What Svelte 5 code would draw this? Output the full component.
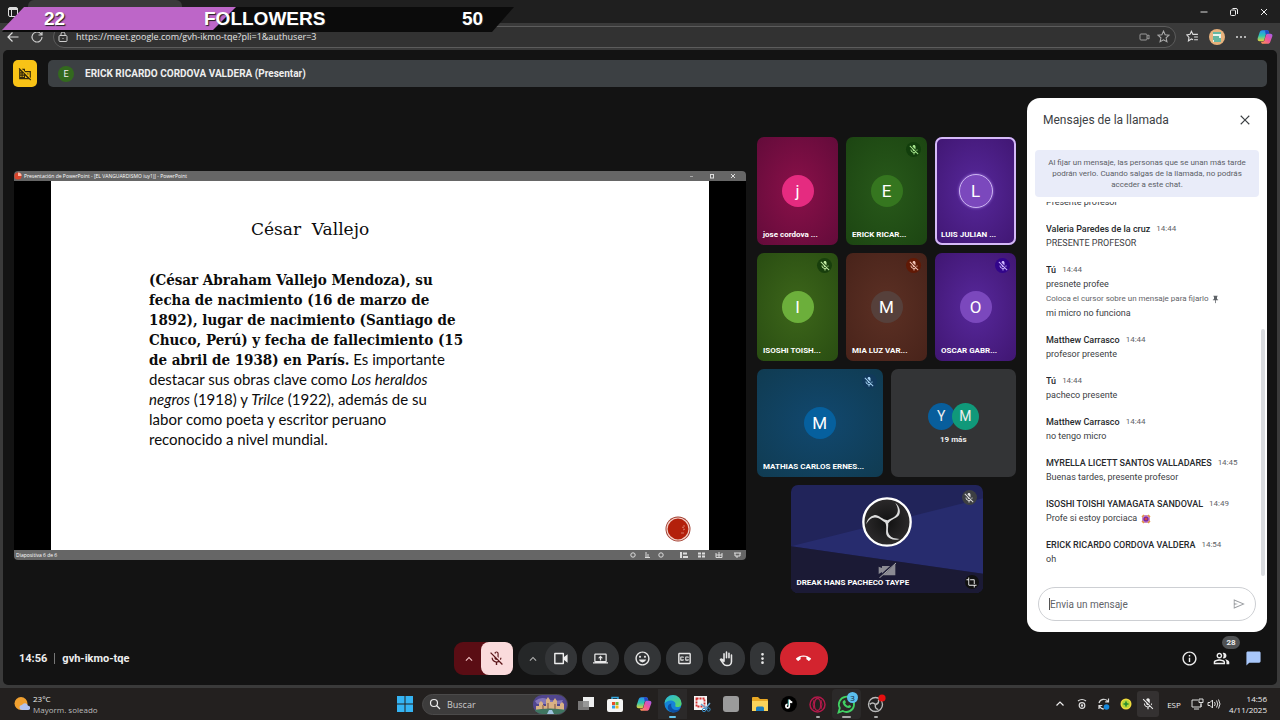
<script>
  const paths = {
    micOff: 'M19 11h-1.7c0 .74-.16 1.43-.43 2.05l1.23 1.23c.56-.98.9-2.09.9-3.28zm-4.02.17c0-.06.02-.11.02-.17V5c0-1.66-1.34-3-3-3S9 3.34 9 5v.18l5.98 5.99zM4.27 3L3 4.27l6.01 6.01V11c0 1.66 1.33 3 2.99 3 .22 0 .44-.03.65-.08l1.66 1.66c-.71.33-1.5.52-2.31.52-2.76 0-5.3-2.1-5.3-5.1H5c0 3.41 2.72 6.23 6 6.72V21h2v-3.28c.91-.13 1.77-.45 2.54-.9L19.73 21 21 19.73 4.27 3z',
    micOffLine: 'M19 11h-1.7c0 .74-.16 1.43-.43 2.05l1.23 1.23c.56-.98.9-2.09.9-3.28zM10.6 5c0-.8.6-1.4 1.4-1.4s1.4.6 1.4 1.4v4.6l1.6 1.6V5c0-1.66-1.34-3-3-3-1.5 0-2.7 1-2.95 2.4l1.55 1.55V5zM4.27 3L3 4.27l6.01 6.01V11c0 1.66 1.33 3 2.99 3 .22 0 .44-.03.65-.08l1.66 1.66c-.71.33-1.5.52-2.31.52-2.76 0-5.3-2.1-5.3-5.1H5c0 3.41 2.72 6.23 6 6.72V21h2v-3.28c.91-.13 1.77-.45 2.54-.9L19.73 21 21 19.73 4.27 3z',
    present: 'M20 18c1.1 0 2-.9 2-2V6c0-1.1-.9-2-2-2H4c-1.1 0-2 .9-2 2v10c0 1.1.9 2 2 2H0v2h24v-2h-4zM4 16V6h16v10H4zM11 15h2v-3.5h3L12 7.2l-4 4.3h3z',
    hangup: 'M12 9c-1.6 0-3.15.25-4.6.72v3.1c0 .39-.23.74-.56.9-.98.49-1.87 1.12-2.66 1.85-.18.18-.43.28-.7.28-.28 0-.53-.11-.71-.29L.29 13.08c-.18-.17-.29-.42-.29-.7 0-.28.11-.53.29-.71C3.34 8.78 7.46 7 12 7s8.66 1.78 11.71 4.67c.18.18.29.43.29.71 0 .28-.11.53-.29.71l-2.48 2.48c-.18.18-.43.29-.71.29-.27 0-.52-.11-.7-.28-.79-.74-1.69-1.36-2.67-1.85-.33-.16-.56-.5-.56-.9v-3.1C15.15 9.25 13.6 9 12 9z',
    mood: 'M12 2C6.47 2 2 6.48 2 12s4.47 10 10 10 10-4.48 10-10S17.52 2 12 2zM12 20c-4.42 0-8-3.58-8-8s3.58-8 8-8 8 3.58 8 8-3.58 8-8 8zm3.5-9c.83 0 1.5-.67 1.5-1.5S16.33 8 15.5 8 14 8.67 14 9.5s.67 1.5 1.5 1.5zm-7 0c.83 0 1.5-.67 1.5-1.5S9.33 8 8.5 8 7 8.67 7 9.5 7.67 11 8.5 11zM7 13.5h10c-.8 2.3-2.7 4-5 4s-4.2-1.7-5-4z',
    camera: 'M15 6v12H5V6h10m1-2H4c-.55 0-1 .45-1 1v14c0 .55.45 1 1 1h12c.55 0 1-.45 1-1v-5l5 4V6l-5 4V5c0-.55-.45-1-1-1z',
    captions: 'M19 4H5c-1.11 0-2 .9-2 2v12c0 1.1.89 2 2 2h14c1.1 0 2-.9 2-2V6c0-1.1-.9-2-2-2zm0 14H5V6h14v12zM7 15h3c.55 0 1-.45 1-1v-1H9.5v.5h-2v-3h2v.5H11v-1c0-.55-.45-1-1-1H7c-.55 0-1 .45-1 1v4c0 .55.45 1 1 1zm7 0h3c.55 0 1-.45 1-1v-1h-1.5v.5h-2v-3h2v.5H18v-1c0-.55-.45-1-1-1h-3c-.55 0-1 .45-1 1v4c0 .55.45 1 1 1z',
    more: 'M12 7.5a2.2 2.2 0 1 0 0-4.4 2.2 2.2 0 0 0 0 4.4zm0 2.3a2.2 2.2 0 1 0 0 4.4 2.2 2.2 0 0 0 0-4.4zm0 6.7a2.2 2.2 0 1 0 0 4.4 2.2 2.2 0 0 0 0-4.4z',
    up: 'M12 8l-6 6 1.4 1.4 4.6-4.6 4.6 4.6L18 14z',
    info: 'M11 7h2v2h-2zm0 4h2v6h-2zm1-9C6.48 2 2 6.48 2 12s4.48 10 10 10 10-4.48 10-10S17.52 2 12 2zm0 18c-4.41 0-8-3.59-8-8s3.59-8 8-8 8 3.59 8 8-3.59 8-8 8z',
    people: 'M16.67 13.13C18.04 14.06 19 15.32 19 17v3h4v-3c0-2.18-3.57-3.47-6.33-3.87zM15 12c2.21 0 4-1.79 4-4s-1.79-4-4-4c-.47 0-.91.1-1.33.24C14.5 5.27 15 6.58 15 8s-.5 2.73-1.33 3.76c.42.14.86.24 1.33.24zM9 12c2.21 0 4-1.79 4-4s-1.79-4-4-4-4 1.79-4 4 1.79 4 4 4zm0-6c1.1 0 2 .9 2 2s-.9 2-2 2-2-.9-2-2 .9-2 2-2zM9 13c-2.67 0-8 1.34-8 4v3h16v-3c0-2.66-5.33-4-8-4zm6 5H3v-.99C3.2 16.29 6.3 15 9 15s5.8 1.29 6 2v1z',
    chat: 'M20 2H4c-1.1 0-2 .9-2 2v18l4-4h14c1.1 0 2-.9 2-2V4c0-1.1-.9-2-2-2z',
    crop: 'M17 15h2V7c0-1.1-.9-2-2-2H9v2h8v8zM7 17V1H5v4H1v2h4v10c0 1.1.9 2 2 2h10v4h2v-4h4v-2H7z',
    send: 'M3 20V4l19 8-19 8zm1.5-2.3L18 12 4.5 6.3v4.4l6 1.3-6 1.3z',
    pin: 'M16 9V4h1c.55 0 1-.45 1-1s-.45-1-1-1H7c-.55 0-1 .45-1 1s.45 1 1 1h1v5c0 1.66-1.34 3-3 3v2h5.97v7l1 1 1-1v-7H19v-2c-1.66 0-3-1.34-3-3z',
    close: 'M19 6.2L17.8 5 12 10.8 6.2 5 5 6.2 10.8 12 5 17.8 6.2 19 12 13.2 17.8 19 19 17.8 13.2 12z',
    noCompany: 'M1.1 3L2.5 1.6l20 20-1.4 1.4-2-2H2V4zM4 6.5V9h2V8.5zM4 11v2h2v-2zm0 4v2h2v-2zm4 0v2h2v-2zm0-4v2h2v-2zm4 8h4l-4-4zM6.5 3H12v4h10v12l-2-2V9h-7.500L10 6.500V5H8.500zM15 11h3v2h-1.500z'
  };

  const tiles = [
    [
      { name: 'jose cordova ...', letter: 'j', hue: 'pink' },
      { name: 'ERICK RICAR...', letter: 'E', hue: 'green', muted: true },
      { name: 'LUIS JULIAN ...', letter: 'L', hue: 'violet', speaking: true }
    ],
    [
      { name: 'ISOSHI TOISH...', letter: 'I', hue: 'lime', muted: true },
      { name: 'MIA LUZ VAR...', letter: 'M', hue: 'brown', muted: true },
      { name: 'OSCAR GABR...', letter: 'O', hue: 'violet', muted: true }
    ]
  ];

  const messages = [
    { who: 'Valeria Paredes de la cruz', at: '14:44', text: 'PRESENTE PROFESOR' },
    { who: 'Tú', at: '14:44', text: 'presnete profee', hint: 'Coloca el cursor sobre un mensaje para fijarlo', after: 'mi micro no funciona' },
    { who: 'Matthew Carrasco', at: '14:44', text: 'profesor presente' },
    { who: 'Tú', at: '14:44', text: 'pacheco presente' },
    { who: 'Matthew Carrasco', at: '14:44', text: 'no tengo micro' },
    { who: 'MYRELLA LICETT SANTOS VALLADARES', at: '14:45', text: 'Buenas tardes, presente profesor' },
    { who: 'ISOSHI TOISHI YAMAGATA SANDOVAL', at: '14:49', text: 'Profe si estoy porciaca', flower: true },
    { who: 'ERICK RICARDO CORDOVA VALDERA', at: '14:54', text: 'oh' }
  ];
</script>

{#snippet icon(name, size)}
  <svg class="icon" width={size} height={size} viewBox="0 0 24 24" fill="currentColor" fill-rule="evenodd" aria-hidden="true"><path d={paths[name]} /></svg>
{/snippet}

{#snippet copilot(size)}
  <svg width={size} height={size} viewBox="0 0 24 24" aria-hidden="true">
    <defs>
      <linearGradient id="cpA" x1="0" y1="0" x2="0" y2="1"><stop offset="0" stop-color="#2a8df0" /><stop offset=".5" stop-color="#2fc7b0" /><stop offset="1" stop-color="#e8d33a" /></linearGradient>
      <linearGradient id="cpB" x1="1" y1="0" x2="0" y2="1"><stop offset="0" stop-color="#a05cf0" /><stop offset=".5" stop-color="#f0559a" /><stop offset="1" stop-color="#ff9a4a" /></linearGradient>
    </defs>
    <path d="M8 2h7c2 0 2.5 1 3 3l.6 2h-3c-1.6 0-2.4 1-2.8 2.5L11 16c-.6 2-1.4 2.5-3 2.5H4C1.5 18.5.5 16.5 1 14L4 5c.7-2 2-3 4-3z" fill="url(#cpA)" />
    <path d="M16 22H9c-2 0-2.5-1-3-3h2.5c1.6 0 2.4-1 2.8-2.5L13 10c.6-2 1.4-3 3-3h4c2.5 0 3.5 1.5 3 4l-3 8c-.7 2-2 3-4 3z" fill="url(#cpB)" />
    <path d="M12 2h3c2 0 2.5 1 3 3l.6 2h-3c-1.2 0-2 .6-2.5 1.5z" fill="#2747c8" />
  </svg>
{/snippet}

<div class="desktop">
  <header class="browser">
    <div class="tabs">
      <svg width="12" height="12" viewBox="0 0 12 12" fill="none" stroke="#ddd" aria-hidden="true"><rect x="1.5" y="1.5" width="9" height="9" rx="1.5" /><path d="M1.5 3h9" stroke-width="2" /><path d="M4.5 3v7" /></svg>
      <div class="tab"></div>
      <div class="window">
        <button aria-label="Minimizar"><svg width="10" height="10" viewBox="0 0 10 10" stroke="#ddd" fill="none"><path d="M1.5 5h7" /></svg></button>
        <button aria-label="Restaurar"><svg width="10" height="10" viewBox="0 0 10 10" stroke="#eee" fill="none"><rect x="1.5" y="3" width="5" height="5.5" rx="1" /><path d="M3.5 1.5H7q1.500 0 1.500 1.500v4" /></svg></button>
        <button aria-label="Cerrar ventana"><svg width="10" height="10" viewBox="0 0 10 10" stroke="#eee" fill="none"><path d="M2 2l6 6M8 2L2 8" /></svg></button>
      </div>
    </div>
    <div class="toolbar">
      <button aria-label="Atrás"><svg width="14" height="14" viewBox="0 0 14 14" fill="none" stroke="#ddd" stroke-width="1.2"><path d="M12.5 7H2M6.5 2.5L2 7l4.500 4.500" /></svg></button>
      <button aria-label="Actualizar"><svg width="14" height="14" viewBox="0 0 14 14" fill="none" stroke="#ccc" stroke-width="1.2"><path d="M12 7a5 5 0 1 1-1.500-3.600L12 5M12 1.500V5H8.500" /></svg></button>
      <div class="address">
        <svg width="12" height="12" viewBox="0 0 12 12" fill="none" stroke="#ccc" aria-hidden="true"><rect x="2" y="4.5" width="8" height="6" rx="1" /><path d="M4 4.500V3a2 2 0 0 1 4 0v1.500M6 7v1" /></svg>
        <input aria-label="Dirección" value="https://meet.google.com/gvh-ikmo-tqe?pli=1&authuser=3" />
        <svg width="12" height="12" viewBox="0 0 12 12" fill="none" stroke="#999" aria-hidden="true"><rect x="2" y="3" width="7" height="6" rx="1" /><path d="M9 5l2-1v4L9 7" /></svg>
        <svg width="13" height="13" viewBox="0 0 24 24" fill="none" stroke="#aaa" stroke-width="2" aria-hidden="true"><path d="M12 2l3 6.700 7.200.8-5.400 4.900 1.500 7.200-6.300-3.600-6.300 3.600 1.500-7.200L1.800 9.500 9 8.700z" /></svg>
      </div>
      <button aria-label="Favoritos"><svg width="13" height="13" viewBox="0 0 24 24" fill="none" stroke="#ddd" stroke-width="2"><path d="M13 18l-3-1.500L4.500 20l1-6.500L1.500 9l6-1L10 2.500 12.700 8H22M15 13h7M15 18h7" /></svg></button>
      <button aria-label="Perfil"><svg width="16" height="16" viewBox="0 0 16 16"><circle cx="8" cy="8" r="8" fill="#e8b27c" /><rect x="4" y="3" width="8" height="10" fill="#e8f5ee" /><path d="M4 4h8M4 8h6M4 10h8M5 12h7" stroke="#3aa288" stroke-width="1.4" /></svg></button>
      <button aria-label="Más opciones"><svg width="12" height="12" viewBox="0 0 12 12" fill="#ddd"><circle cx="2" cy="6" r="1" /><circle cx="6" cy="6" r="1" /><circle cx="10" cy="6" r="1" /></svg></button>
      <button aria-label="Copilot del navegador">{@render copilot(16)}</button>
    </div>
  </header>

  <aside class="goal" aria-label="Meta de seguidores">
    <div class="goal-track"></div>
    <div class="goal-fill"></div>
    <span>22</span><span>FOLLOWERS</span><span>50</span>
  </aside>

  <main class="meet">
    <div class="presenter-row">
      <button class="company" aria-label="Fuera de la organización">{@render icon('noCompany', 14)}</button>
      <div class="presenter"><span class="dot">E</span><strong>ERICK RICARDO CORDOVA VALDERA (Presentar)</strong></div>
    </div>

    <div class="stage">
      <section class="share">
        <div class="ppt-title">
          <svg width="8" height="8" viewBox="0 0 8 8" aria-hidden="true"><circle cx="4" cy="4" r="3.6" fill="#d9452c" /><path d="M4 4V.4A3.600 3.600 0 0 1 7.600 4z" fill="#ffb59f" /></svg>
          <span>Presentación de PowerPoint - [EL VANGUARDISMO iuy1)] - PowerPoint</span>
          <svg width="54" height="8" viewBox="0 0 54 8" fill="none" stroke="#ddd" aria-hidden="true"><path d="M2 4.500h3" stroke="#aaa" /><rect x="22.5" y="2.5" width="3" height="3.5" /><path d="M43 2l4 4M47 2l-4 4" /></svg>
        </div>
        <article class="slide">
          <h1>César&nbsp; Vallejo</h1>
          <p>
            <b>(César Abraham Vallejo Mendoza), su<br />fecha de nacimiento (16 de marzo de<br />1892), lugar de nacimiento (Santiago de<br />Chuco, Perú) y fecha de fallecimiento (15<br />de abril de 1938) en París.</b> Es importante<br />destacar sus obras clave como <i>Los heraldos<br />negros</i> (1918) y <i>Trilce</i> (1922), además de su<br />labor como poeta y escritor peruano<br />reconocido a nivel mundial.
          </p>
          <svg class="seal" width="26" height="26" viewBox="0 0 26 26" aria-hidden="true"><circle cx="13" cy="13" r="12.5" fill="#a03a2c" /><circle cx="13" cy="13" r="11" fill="#b3200b" stroke="#f3cfc6" stroke-width="1.2" /><path d="M17 11l2 1M18 14l2-1M16 17l3 0M19 9v2" stroke="#d87766" /></svg>
        </article>
        <div class="ppt-status">
          <span>Diapositiva 6 de 6</span>
          <svg width="114" height="8" viewBox="0 0 114 8" fill="none" stroke="#ddd" aria-hidden="true"><circle cx="5" cy="4" r="2.2" /><path d="M18 1v6M20 3v4M17 6.500h5" /><circle cx="33" cy="4" r="2.200" /><path d="M53 1v6M55 2.500h4M55 6h5" stroke-width="2" /><path d="M70 2.500h3M74 2.500h3M70 5.500h3M74 5.500h3" stroke-width="2" /><path d="M88 2v4.500h6V2M91 1v6M88 4h6M106 2h7M107 2v3h5V2M109 5v2" /></svg>
        </div>
      </section>

      <section class="people" aria-label="Participantes">
        {#each tiles as row}
          <div class="row">
            {#each row as t}
              <div class="tile {t.hue}" class:speaking={t.speaking}>
                <span class="avatar">{t.letter}</span>
                {#if t.muted}<span class="mute">{@render icon('micOff', 12)}</span>{/if}
                <span class="name">{t.name}</span>
              </div>
            {/each}
          </div>
        {/each}
        <div class="row">
          <div class="tile blue"><span class="avatar">M</span><span class="mute">{@render icon('micOff', 12)}</span><span class="name">MATHIAS CARLOS ERNES...</span></div>
          <div class="tile rest"><div class="pair"><span>Y</span><span>M</span></div><strong>19 más</strong></div>
        </div>
        <div class="row">
          <div class="tile self">
            <svg class="backdrop" viewBox="0 0 576 324" preserveAspectRatio="none" aria-hidden="true"><path d="M0 0h576v324H0z" fill="#21245a" /><path d="M0 184L576 40v226z" fill="#272c6e" /><path d="M0 184l576 82v58H0z" fill="#1b1a35" /></svg>
            <svg class="obs" width="50" height="50" viewBox="-75 -75 150 150" aria-hidden="true">
              <defs><radialGradient id="ob"><stop offset="0" stop-color="#111" /><stop offset="1" stop-color="#2c2a2b" /></radialGradient></defs>
              <circle r="71" fill="url(#ob)" stroke="#fff" stroke-width="7" />
              {#each [0, 120, 240] as a}<path transform="rotate({a})" fill="#ddd" d="M-4 0C6-12 23-11 30-25 35-35 32-46 25-58 37-48 41-34 37-23 32-10 13-10 4 4z" />{/each}
            </svg>
            <svg class="cam-off" width="18" height="16" viewBox="0 0 54 48" aria-hidden="true"><path d="M2 14l10 4v-6h26l14-10v38H12V30L2 36z" fill="#8b8b93" /><path d="M1 48L53 1" stroke="#1b1a35" stroke-width="6" /><path d="M4 48L54 3" stroke="#aaa" stroke-width="3" /></svg>
            <span class="mute">{@render icon('micOff', 12)}</span>
            <span class="name">DREAK HANS PACHECO TAYPE</span>
            <span class="crop">{@render icon('crop', 11)}</span>
          </div>
        </div>
      </section>

      <section class="chat">
        <header><h2>Mensajes de la llamada</h2><button aria-label="Cerrar">{@render icon('close', 16)}</button></header>
        <p class="notice">Al fijar un mensaje, las personas que se unan más tarde<br />podrán verlo. Cuando salgas de la llamada, no podrás<br />acceder a este chat.</p>
        <div class="scroll">
          <div class="log">
            <div class="msg"><p>Presente profesor</p></div>
            {#each messages as m}
              <div class="msg">
                <h3>{m.who}<time>{m.at}</time></h3>
                <p>{m.text}{#if m.flower}<svg width="10" height="10" viewBox="0 0 10 10" aria-hidden="true"><rect x="1" y="1" width="8" height="8" rx="3" fill="#c884c8" /><path d="M1 3l2-2M7 1l2 2M1 7l2 2M9 7L7 9" stroke="#e39a3c" stroke-width="1.5" /><circle cx="5" cy="5" r="2.6" fill="#7a2b9c" /><circle cx="5" cy="5" r="1.3" fill="#e0443c" /></svg>{/if}</p>
                {#if m.hint}<small>{m.hint}{@render icon('pin', 9)}</small>{/if}
                {#if m.after}<p>{m.after}</p>{/if}
              </div>
            {/each}
          </div>
          <div class="thumb"></div>
        </div>
        <form class="composer"><span class="caret"></span><input aria-label="Envia un mensaje" placeholder="Envia un mensaje" /><button type="button" aria-label="Enviar">{@render icon('send', 14)}</button></form>
      </section>
    </div>

    <footer class="controls">
      <div class="code"><span>14:56</span><i></i><span>gvh-ikmo-tqe</span></div>
      <div class="buttons">
        <div class="mic-group"><button aria-label="Opciones de audio">{@render icon('up', 14)}</button><button class="mic" aria-label="Activar micrófono">{@render icon('micOffLine', 17)}</button></div>
        <div class="cam-group"><button aria-label="Opciones de video">{@render icon('up', 14)}</button><button class="cam" aria-label="Cámara">{@render icon('camera', 17)}</button></div>
        <button class="pill" aria-label="Presentar">{@render icon('present', 15)}</button>
        <button class="pill" aria-label="Reacciones">{@render icon('mood', 17)}</button>
        <button class="pill" aria-label="Subtítulos">{@render icon('captions', 17)}</button>
        <button class="pill" aria-label="Levantar la mano"><svg width="17" height="17" viewBox="0 0 24 24" fill="none" stroke="currentColor" stroke-width="2.2" stroke-linecap="round" stroke-linejoin="round"><path d="M8.500 12V5.500M12 11V3M15.500 11V4.500M19 7v9.500a5.500 5.500 0 0 1-5.500 5.500h-1.500c-1.800 0-3-.6-4-2L3.500 13.500q1-1 2.200-.2L8.500 16V12" /></svg></button>
        <button class="pill slim" aria-label="Más">{@render icon('more', 15)}</button>
        <button class="end" aria-label="Salir">{@render icon('hangup', 15)}</button>
      </div>
      <div class="panels">
        <button aria-label="Detalles">{@render icon('info', 17)}</button>
        <button class="count" aria-label="Personas">{@render icon('people', 17)}<span>28</span></button>
        <button class="active" aria-label="Chat">{@render icon('chat', 17)}</button>
      </div>
    </footer>
  </main>

  <footer class="taskbar">
    <div class="weather">
      <svg width="16" height="16" viewBox="0 0 16 16" aria-hidden="true"><circle cx="7" cy="7.5" r="6.5" fill="#f0a030" /><path d="M8 14a2.500 2.500 0 0 1 0-5 3.200 3.200 0 0 1 6 .8A2.100 2.100 0 0 1 14 14z" fill="#b4c3ee" /></svg>
      <div><span>23°C</span><span>Mayorm. soleado</span></div>
    </div>
    <div class="apps">
      <button aria-label="Inicio"><svg width="16" height="16" viewBox="0 0 16 16"><path d="M0 0h7.500v7.500H0zM8.500 0H16v7.500H8.500zM0 8.500h7.500V16H0zM8.500 8.500H16V16H8.500z" fill="#35b4f3" /></svg></button>
      <label class="search">
        <svg width="12" height="12" viewBox="0 0 12 12" fill="none" stroke="#eee" stroke-width="1.2" aria-hidden="true"><circle cx="5" cy="5" r="3.5" /><path d="M7.500 7.500L11 11" /></svg>
        <input aria-label="Buscar" placeholder="Buscar" />
        <svg width="34" height="19" viewBox="0 0 34 19" aria-hidden="true"><defs><clipPath id="pillClip"><rect width="34" height="19" rx="9" /></clipPath></defs><g clip-path="url(#pillClip)"><rect width="34" height="19" fill="#51468f" /><path d="M2 6q6-5 12-2t16 1l-2 4H4z" fill="#8577b8" /><path d="M3 16v-5h3V8l2-2 2 2v3h3V5l2-3 2 3v2h3V6l2-3 2 3v5h3V9l2-2 2 2v7z" fill="#d9b184" /><path d="M9 17V10h2v7M14 17V8h2v9M21 17V9h2v8" fill="#a97f62" /><path d="M0 15q17-3 34 0v4H0z" fill="#3f7560" /><path d="M14 19l2-4h3l2 4z" fill="#9ec3df" /></g></svg>
      </label>
      <button aria-label="Vista de tareas"><svg width="18" height="16" viewBox="0 0 18 16"><rect x="6" y="1" width="11" height="10" fill="#eee" /><rect x="1" y="5" width="11" height="9" fill="#888" opacity=".85" /></svg></button>
      <button aria-label="Tienda"><svg width="16" height="16" viewBox="0 0 16 16"><path d="M5 4V1.500h6V4" fill="none" stroke="#36a9e1" stroke-width="1.5" /><rect y="3" width="16" height="13" rx="2" fill="#f4f4f4" /><path d="M5 6h3v3H5z" fill="#e84d26" /><path d="M8.500 6h3v3h-3z" fill="#6cbb38" /><path d="M5 9.500h3v3H5z" fill="#2f9fe8" /><path d="M8.500 9.500h3v3h-3z" fill="#f4b81c" /></svg></button>
      <button aria-label="Copilot">{@render copilot(16)}</button>
      <button class="open current" aria-label="Edge"><svg width="18" height="18" viewBox="0 0 18 18"><defs><linearGradient id="eg" x1="0" y1="0" x2="1" y2="1"><stop offset="0" stop-color="#24b6e8" /><stop offset="1" stop-color="#60d957" /></linearGradient></defs><circle cx="9" cy="9" r="8.5" fill="#1583d8" /><path d="M.5 8.500a8.500 8.500 0 0 1 17 0c0 3-3 4-5 3.500-2-.5-1-1.500-1-3C11.500 7 9 5.500 6.500 5.500S1.500 7 .5 8.500z" fill="url(#eg)" /><path d="M7.500 8.500c-1 2 0 6 4 6.500 2 .3 3.500-.5 5-1.500-2 4-6 4.500-9 3.500-5-1.600-5-8 0-8.500z" fill="#0c4fa4" /></svg></button>
      <button aria-label="Recortes"><svg width="18" height="18" viewBox="0 0 18 18"><rect x="1" y="1" width="13" height="14" fill="#f4f4f4" /><rect x="3.5" y="3.5" width="8" height="8" fill="none" stroke="#d42f2f" stroke-width="1.8" stroke-dasharray="2 1" /><path d="M8 9l6 5M17 8l-5 6" stroke="#6aa5cf" stroke-width="1.5" /><circle cx="11" cy="15" r="1.7" fill="none" stroke="#3a8ec8" /><circle cx="15.5" cy="14.5" r="1.7" fill="none" stroke="#3a8ec8" /></svg></button>
      <button aria-label="Aplicación"><svg width="16" height="16" viewBox="0 0 16 16"><rect width="16" height="16" rx="3" fill="#9b9b9b" /></svg></button>
      <button aria-label="Explorador"><svg width="18" height="16" viewBox="0 0 18 16"><path d="M1 2q0-1 1-1h5l2 2h7q1 0 1 1v11H1z" fill="#e9a824" /><path d="M1 5h16v10H1z" fill="#fbd45b" /><path d="M5 15v-3q0-1.500 1.500-1.500h5q1.500 0 1.500 1.500v3z" fill="#1d7ebd" /></svg></button>
      <button aria-label="TikTok"><svg width="16" height="16" viewBox="0 0 16 16"><circle cx="8" cy="8" r="8" fill="#000" /><path d="M8.300 3.500v6.600A1.700 1.700 0 1 1 6.600 8.400M8.300 3.700q.5 2.300 3 2.600" fill="none" stroke="#fff" stroke-width="1.7" /><path d="M7.300 3.500v6" stroke="#35d6d0" stroke-width=".6" /></svg></button>
      <button class="open" aria-label="Opera GX"><svg width="17" height="17" viewBox="0 0 17 17" fill="none" stroke="#b3194a"><circle cx="8.5" cy="8.5" r="7.5" stroke-width="1.5" /><ellipse cx="8.5" cy="8.5" rx="3.2" ry="6" stroke-width="1.4" /><path d="M5 4q-2 4.500 0 9M12 4q2 4.500 0 9" /></svg></button>
      <button class="open wide" aria-label="WhatsApp"><svg width="22" height="22" viewBox="0 0 22 22"><path d="M2.500 19.500l1.300-4.500a7.600 7.600 0 1 1 3 3z" fill="none" stroke="#41d163" stroke-width="1.8" /><path d="M7.700 7.500q1-1 1.600.2l.6 1.500-.8 1.200q1 1.900 2.900 2.700l1.200-1 2 1q-.4 2.200-2.600 2-4.800-1-6-5.700 0-1.200 1.100-1.900z" fill="#41d163" /></svg><span>3</span></button>
      <button class="open" aria-label="OBS Studio"><svg width="20" height="20" viewBox="0 0 20 20"><circle cx="9.5" cy="10.5" r="7" fill="#222" stroke="#bbb" stroke-width="1.3" />{#each [0, 120, 240] as a}<path transform="translate(9.5 10.5) rotate({a})" d="M0 0q4-1 3-5" fill="none" stroke="#bbb" stroke-width="1.5" />{/each}<circle cx="16" cy="4" r="3.6" fill="#e60f0f" /></svg></button>
    </div>
    <div class="tray">
      <button aria-label="Iconos ocultos"><svg width="10" height="10" viewBox="0 0 10 10" fill="none" stroke="#eee" stroke-width="1.2"><path d="M1.500 6.500L5 3l3.500 3.500" /></svg></button>
      <button aria-label="Conexión"><svg width="12" height="12" viewBox="0 0 12 12" fill="none" stroke="#ddd" stroke-width="1.2"><circle cx="6" cy="7.5" r="2.8" /><path d="M2 3q4-3 8 0" /><circle cx="6" cy="7.5" r=".6" /></svg></button>
      <button aria-label="Sincronización"><svg width="14" height="14" viewBox="0 0 14 14" fill="none" stroke="#ddd" stroke-width="1.2"><path d="M2 6a5 5 0 0 1 9-1.500M11.500 1.500v3.300H8.200M2 12V8.500h3.300M2.500 9A5 5 0 0 0 7 12" /><circle cx="9.5" cy="10" r="2.8" fill="#1688dc" stroke="none" /></svg></button>
      <button aria-label="Antivirus"><svg width="12" height="12" viewBox="0 0 12 12"><circle cx="6" cy="6" r="5.5" fill="#f0dc3c" /><circle cx="6" cy="6" r="4" fill="#b5d63a" /><path d="M6 3.500v5M3.500 6h5" stroke="#258a2e" stroke-width="1.6" /></svg></button>
      <button class="hot" aria-label="Micrófono">{@render icon('micOff', 14)}</button>
      <button class="lang">ESP</button>
      <button class="net" aria-label="Red y volumen"><svg width="32" height="14" viewBox="0 0 32 14" fill="none" stroke="#ddd"><path d="M8 3H2v7h9V7M4 12h5M9 2h4v3.500h-4zM11 5.500V10" /><path d="M18 5.500h2L22.500 3v8L20 8.500h-2zM24.500 5q1.500 2 0 4M26.500 3.500q2.500 3.500 0 7M28.500 2.500q3 4.500 0 9" /></svg></button>
      <div class="clock"><span>14:56</span><span>4/11/2025</span></div>
    </div>
  </footer>
</div>

<style>
  :global(body) { margin: 0; background: #3a3a3a; }
  .desktop { position: relative; display: flex; flex-direction: column; min-height: 100vh; font-family: Roboto, "Open Sans", sans-serif; color: #eee; }
  .desktop * { box-sizing: border-box; }
  button { border: 0; padding: 0; margin: 0; background: none; color: inherit; font: inherit; display: flex; align-items: center; justify-content: center; flex: none; }
  input { border: 0; outline: 0; padding: 0; background: none; color: inherit; font: inherit; min-width: 0; flex: 1; }
  svg { display: block; flex: none; }
  h1, h2, h3, p { margin: 0; font-weight: 400; }

  .browser { flex: none; font-family: "Open Sans", sans-serif; }
  .tabs { display: flex; align-items: center; height: 23px; background: #1f1f1f; padding: 0 1px 0 7px; }
  .tab { width: 154px; height: 23px; margin-left: 9px; background: #3a3a3a; border-radius: 6px 6px 0 0; }
  .window { margin-left: auto; display: flex; }
  .window button { width: 30px; height: 23px; }
  .toolbar { display: flex; align-items: center; height: 27px; gap: 10px; padding: 0 7px 0 6px; background: #3a3a3a; }
  .address { flex: 1; display: flex; align-items: center; gap: 7px; height: 22px; margin-left: -1px; padding: 0 5px 0 3px; border: 1px solid #5c5c5c; border-radius: 11px; background: #323232; color: #e4e4e4; font-size: 9px; }

  .goal { position: absolute; left: 2px; top: 7px; width: 530px; height: 25px; font: 700 19px/24px "Liberation Sans", sans-serif; color: #fff; text-shadow: 1px 1px 1px #222; }
  .goal-track { position: absolute; left: 0; top: 0; width: 512px; height: 25px; background: #0b0b0b; clip-path: polygon(22px 0, 100% 0, 490px 100%, 0 100%); }
  .goal-fill { position: absolute; left: 0; top: 0; width: 234px; height: 23px; background: #bd66c8; clip-path: polygon(22px 0, 100% 0, 211px 100%, 0 100%); }
  .goal span { position: absolute; top: 0; left: 42px; }
  .goal span:nth-of-type(2) { left: 202px; }
  .goal span:nth-of-type(3) { left: 460px; }

  .meet { flex: 1; display: flex; flex-direction: column; margin: 0 3px; background: #131313; border-radius: 5px; }
  .presenter-row { display: flex; gap: 11px; padding: 10px 10px 11px; }
  .company { width: 24px; height: 27px; border-radius: 5px; background: #f9c316; color: #33270a; }
  .presenter { flex: 1; display: flex; align-items: center; gap: 11px; padding-left: 10px; height: 27px; border-radius: 5px; background: #3c4043; font-size: 10px; }
  .dot { width: 16px; height: 16px; border-radius: 50%; background: #33691e; text-align: center; font-size: 9px; line-height: 16px; }

  .stage { flex: 1; display: flex; align-items: center; gap: 11px; padding: 0 10px 0 11px; }
  .share { flex: 1; min-width: 0; display: flex; flex-direction: column; border-radius: 4px; overflow: hidden; background: #000; font-family: "Open Sans", sans-serif; }
  .ppt-title, .ppt-status { display: flex; align-items: center; justify-content: space-between; height: 10px; background: #666; font-size: 5px; line-height: 10px; padding-right: 4px; color: #fff; }
  .ppt-title span { flex: 1; padding-left: 2px; }
  .ppt-status { padding-left: 2px; }
  .slide { position: relative; height: 369px; margin: 0 37px; padding: 36px 98px 0; background: #fff; color: #0c0c0c; }
  .slide h1 { font: 400 17px/24px "DejaVu Serif", serif; padding-left: 102px; }
  .slide p { margin-top: 28px; font: 400 15px/20px Lato, sans-serif; white-space: nowrap; }
  .slide b { font-family: "DejaVu Serif Condensed", "DejaVu Serif", serif; font-weight: 700; line-height: 1; }
  .seal { position: absolute; right: 18px; bottom: 8px; }

  .people { width: 259px; flex: none; display: flex; flex-direction: column; gap: 8px; }
  .row { display: flex; gap: 8px; justify-content: center; }
  .tile { position: relative; flex: 1; height: 108px; border-radius: 7px; overflow: hidden; display: flex; flex-direction: column; align-items: center; justify-content: center; }
  .avatar { width: 32px; height: 32px; border-radius: 50%; text-align: center; font-size: 17px; line-height: 32px; color: #fff; }
  .name { position: absolute; left: 6px; bottom: 4px; font-size: 8px; line-height: 12px; font-weight: 700; color: #fff; white-space: nowrap; }
  .mute { position: absolute; right: 6px; top: 5px; width: 15px; height: 15px; border-radius: 50%; display: flex; align-items: center; justify-content: center; }
  .pink { background: radial-gradient(#8a1049, #630b3a); }
  .pink .avatar { background: #e52b80; }
  .green { background: radial-gradient(#28591a, #1c4512); }
  .green .avatar { background: #35761f; }
  .green .mute { background: #123e0c; color: #a6e68c; }
  .lime { background: radial-gradient(#3d661a, #294d12); }
  .lime .avatar { background: #6caf3b; }
  .lime .mute { background: #183e0c; color: #c5eea5; }
  .violet { background: radial-gradient(#57289b, #401672); }
  .violet .avatar { background: #7b48bd; }
  .violet .mute { background: #32058b; color: #cfb8ff; }
  .brown { background: radial-gradient(#5c3024, #48231a); }
  .brown .avatar { background: #56403b; }
  .brown .mute { background: #611905; color: #f3c4b6; }
  .blue { background: radial-gradient(#11486f, #103b51); }
  .blue .avatar { background: #06609e; }
  .blue .mute { background: #113a5c; color: #a6d3f4; }
  .speaking { box-shadow: inset 0 0 0 2px #d5b9f8; }
  .speaking .avatar { border: 1px solid #cbb4f0; width: 34px; height: 34px; box-shadow: 0 0 3px #9e74e0; }
  .rest { background: #333436; gap: 5px; padding-top: 2px; }
  .rest strong { font-size: 8px; line-height: 10px; }
  .pair { display: flex; font-size: 14px; line-height: 27px; text-align: center; }
  .pair span { width: 27px; border-radius: 50%; background: #085e9c; margin-right: -3px; }
  .pair span + span { background: #10997a; margin-right: 0; }
  .self { flex: 0 0 192px; justify-content: flex-start; padding-top: 12px; }
  .self .backdrop { position: absolute; left: 0; top: 0; width: 100%; height: 100%; }
  .self .obs { position: relative; }
  .self .cam-off { position: relative; margin-top: 15px; }
  .self .mute { background: #3d3f43; color: #ddd; }
  .crop { position: absolute; right: 4px; bottom: 4px; width: 14px; height: 14px; border-radius: 50%; background: #111; display: flex; align-items: center; justify-content: center; }

  .chat { align-self: stretch; width: 240px; flex: none; display: flex; flex-direction: column; background: #fff; border-radius: 13px; color: #3c4043; padding-bottom: 11px; }
  .chat header { display: flex; align-items: center; justify-content: space-between; height: 44px; padding: 0 14px 0 16px; }
  .chat h2 { font-size: 12px; }
  .notice { margin: 8px 8px 5px; padding: 7px 0; background: #e9ecf9; border-radius: 4px; text-align: center; font-size: 8px; line-height: 11px; color: #5b5e66; }
  .scroll { flex: 1 1 0; min-height: 0; overflow: hidden; display: flex; align-items: flex-end; padding: 0 2px 0 19px; }
  .log { flex: 1; height: 100%; overflow: hidden; display: flex; flex-direction: column; justify-content: flex-end; gap: 12px; padding-bottom: 9px; }
  .msg { flex: none; }
  .msg h3 { display: flex; gap: 6px; font-size: 9px; line-height: 14px; font-weight: 500; color: #27292c; }
  .msg time { font-size: 8px; font-weight: 400; color: #5f6368; }
  .msg p { display: flex; align-items: center; gap: 4px; font-size: 9px; line-height: 15px; }
  .msg small { display: flex; align-items: center; gap: 3px; font-size: 8px; line-height: 14px; color: #5f6368; }
  .thumb { width: 4px; height: 66%; background: #dadce0; border-radius: 2px; }
  .composer { display: flex; align-items: center; height: 34px; margin: 11px 11px 0; padding: 0 9px 0 10px; border: 1px solid #cdcfd3; border-radius: 17px; font-size: 10px; color: #9a9da1; }
  .composer input::placeholder { color: #5f6368; opacity: 1; }
  .caret { width: 1px; height: 12px; background: #555; }

  .controls { display: grid; grid-template-columns: 1fr auto 1fr; align-items: center; height: 53px; padding: 0 15px 0 16px; }
  .code { display: flex; align-items: center; gap: 7px; font-size: 11px; font-weight: 700; }
  .code i { width: 1px; height: 11px; background: #777; }
  .buttons { display: flex; gap: 5px; color: #e8e8e8; }
  .buttons button { height: 33px; }
  .mic-group { display: flex; background: #5a0d14; border-radius: 9px; color: #f6c6c8; }
  .mic-group button, .cam-group button { width: 27px; padding-left: 4px; }
  .mic-group .mic { width: 32px; padding: 0; border-radius: 8px; background: #fadbdc; color: #5a1418; }
  .cam-group { display: flex; background: #252728; border-radius: 16px; color: #b0b0b0; }
  .cam-group .cam { width: 32px; padding: 0; border-radius: 16px; background: #333537; color: #eee; }
  .pill { width: 37px; border-radius: 16px; background: #333537; }
  .slim { width: 25px; border-radius: 12px; }
  .end { width: 48px; border-radius: 16px; background: #d3242f; color: #fff; }
  .panels { display: flex; justify-content: flex-end; gap: 15px; }
  .count { position: relative; }
  .count span { position: absolute; left: 9px; top: -14px; width: 18px; height: 13px; border-radius: 7px; background: #505254; font-size: 8px; line-height: 13px; font-weight: 700; }
  .active { color: #a8c7fa; }

  .taskbar { flex: none; display: grid; grid-template-columns: 1fr auto 1fr; align-items: center; height: 32px; margin-top: 3px; background: #23201f; font-family: "Open Sans", sans-serif; font-size: 8px; }
  .weather { display: flex; align-items: center; gap: 3px; padding-left: 14px; line-height: 11px; }
  .weather div, .clock { display: flex; flex-direction: column; }
  .weather span + span { color: #bbb; }
  .apps { display: flex; align-items: center; }
  .apps button { position: relative; width: 29px; height: 30px; }
  .search { display: flex; align-items: center; gap: 6px; width: 146px; height: 21px; margin: 0 3px; padding: 0 0 0 6px; border-radius: 11px; background: #3d3c3c; border: 1px solid #4b4a4a; font-size: 9px; }
  .search input::placeholder { color: #ccc; opacity: 1; }
  .current { background: #2b2929; }
  .open::after { content: ""; position: absolute; left: 13px; bottom: 1px; width: 4px; height: 2px; border-radius: 1px; background: #aaa; }
  .current::after { left: 11px; width: 7px; background: #5fc3ef; }
  .wide { background: #2b2929; border-radius: 4px; }
  .wide::after { left: 10px; width: 9px; }
  .apps button span { position: absolute; right: 3px; top: 3px; width: 11px; height: 11px; border-radius: 50%; background: #5bc0ee; color: #123; font-size: 8px; line-height: 11px; }
  .tray { display: flex; align-items: center; justify-content: flex-end; padding-right: 13px; }
  .tray button { width: 22px; height: 26px; }
  .tray .hot { background: #343131; border-radius: 3px; }
  .tray .lang { width: 30px; }
  .tray .net { width: 34px; }
  .clock { width: 44px; text-align: right; line-height: 11px; white-space: nowrap; }
</style>
